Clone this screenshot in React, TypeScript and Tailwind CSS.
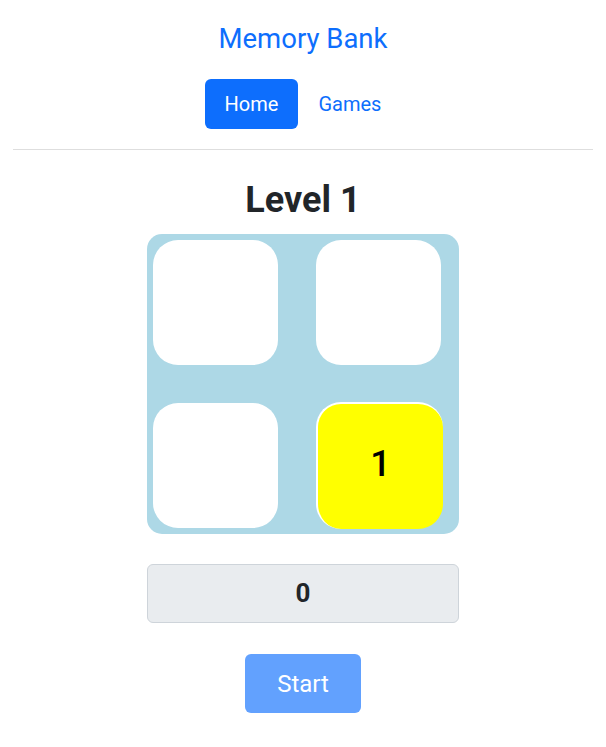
export default function App() {
  const cells = [false, false, false, true];

  return (
    <div className="min-h-screen bg-white px-[13px] font-['Roboto',sans-serif] text-[#212529]">
      <header className="flex flex-col items-center pt-[22px]">
        <h1 className="text-[27.5px] leading-[1.2] text-[#0d6efd]">Memory Bank</h1>
        <nav className="mt-[24px] flex items-center">
          <a className="rounded-[6px] bg-[#0d6efd] px-[20px] py-[10px] text-[20px] leading-[30px] text-white">Home</a>
          <a className="px-[20px] py-[10px] text-[20px] leading-[30px] text-[#0d6efd]">Games</a>
        </nav>
      </header>
      <hr className="mt-[20px] border-t border-[#dedede]" />

      <main className="flex flex-col items-center">
        <h2 className="mt-[29px] text-[36px] font-bold leading-[1.2]">Level 1</h2>

        <div className="mt-[12px] grid w-[312px] grid-cols-[125px_125px] gap-[38px] rounded-[15px] bg-[#add8e6] p-[6px]">
          {cells.map((lit, i) =>
            lit ? (
              <div
                key={i}
                className="-my-px flex h-[127px] w-[127px] items-center justify-center rounded-[25px] border-t-2 border-l-2 border-white bg-[#ffff00] pb-[6px] text-[36px] font-medium text-black"
              >
                1
              </div>
            ) : (
              <div key={i} className="h-[125px] w-[125px] rounded-[25px] bg-white" />
            ),
          )}
        </div>

        <div className="mt-[30px] flex h-[59px] w-[312px] items-center justify-center rounded-[6px] border border-[#ced4da] bg-[#e9ecef] text-[26px] font-bold">
          0
        </div>

        <button
          disabled
          className="mt-[31px] h-[59px] rounded-[6px] bg-[#62a1fe] px-[32px] text-[24px] text-white"
        >
          Start
        </button>
      </main>
    </div>
  );
}
